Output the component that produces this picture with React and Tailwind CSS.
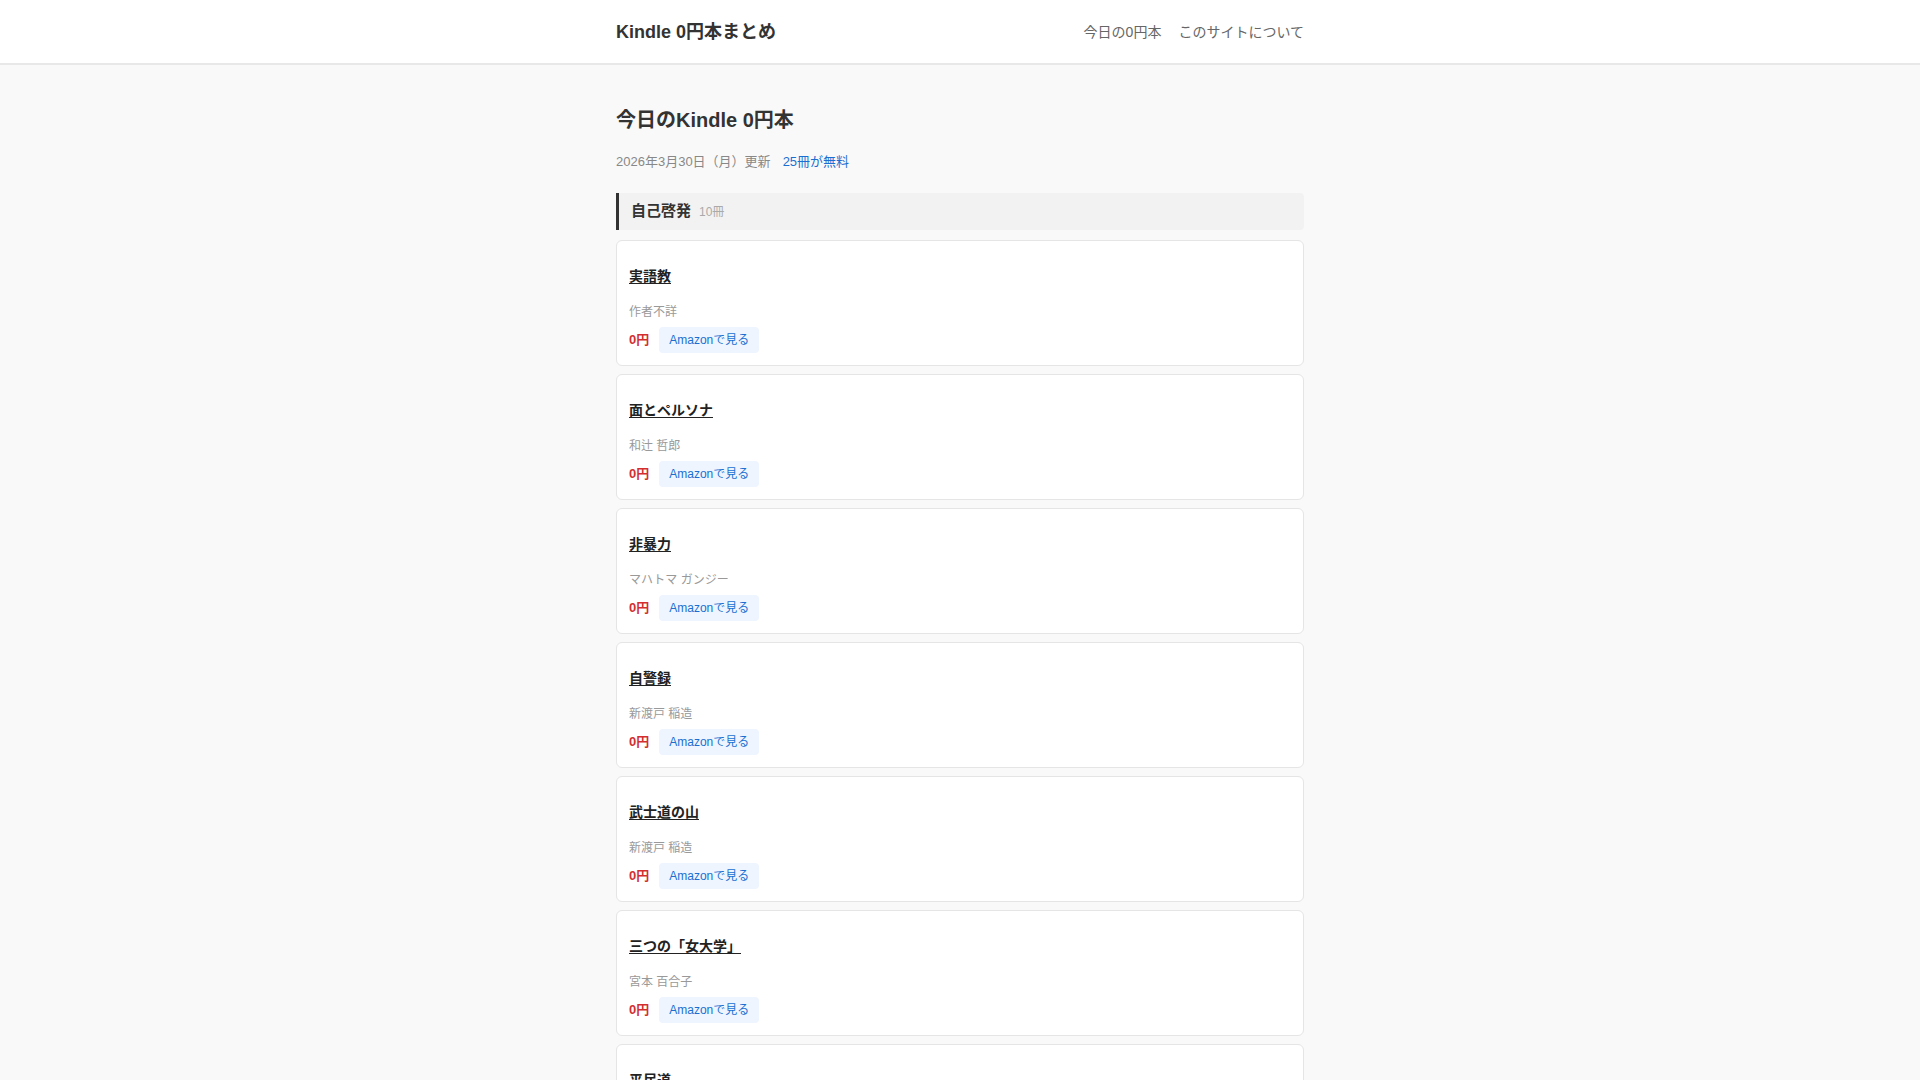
import React from 'react';

const books = [
  { title: '実語教', author: '作者不詳' },
  { title: '面とペルソナ', author: '和辻 哲郎' },
  { title: '非暴力', author: 'マハトマ ガンジー' },
  { title: '自警録', author: '新渡戸 稲造' },
  { title: '武士道の山', author: '新渡戸 稲造' },
  { title: '三つの「女大学」', author: '宮本 百合子' },
  { title: '平民道', author: '新渡戸 稲造' },
  { title: '修養', author: '新渡戸 稲造' },
  { title: '自助論', author: 'サミュエル スマイルズ' },
  { title: '学問のすすめ', author: '福沢 諭吉' },
];

const font = { fontFamily: '"Liberation Sans", "Noto Sans CJK JP", sans-serif' };

const BookCard = ({ title, author }) => (
  <div className="mb-2 rounded-md border border-[#e5e5e5] bg-white px-3 pb-3 pt-[25px]">
    <a href="#" className="block text-sm font-bold leading-[21px] text-[#222] underline underline-offset-2">
      {title}
    </a>
    <div className="mt-4 text-xs leading-[18px] text-[#999]">{author}</div>
    <div className="mt-1.5 flex items-center gap-2.5">
      <span className="text-[13px] font-bold text-[#d32f2f]">0円</span>
      <a href="#" className="flex h-[26px] items-center rounded bg-[#eef5fe] px-2.5 text-xs text-[#1a6fd1]">
        Amazonで見る
      </a>
    </div>
  </div>
);

export default function App() {
  return (
    <div className="min-h-screen bg-[#f9f9f9]" style={font}>
      <header className="border-b-2 border-[#e8e8e8] bg-white">
        <div className="mx-auto flex h-[63px] max-w-[720px] items-center justify-between px-4">
          <span className="text-lg font-bold text-[#333]">Kindle 0円本まとめ</span>
          <nav className="flex gap-[17px] text-sm text-[#666]">
            <a href="#">今日の0円本</a>
            <a href="#">このサイトについて</a>
          </nav>
        </div>
      </header>

      <main className="mx-auto max-w-[720px] px-4 pt-10">
        <h1 className="text-xl font-bold leading-[30px] text-[#333]">今日のKindle 0円本</h1>
        <div className="mt-[17px] flex gap-3 text-[13px] leading-[19px]">
          <span className="text-[#888]">2026年3月30日（月）更新</span>
          <span className="text-[#1a6fd1]">25冊が無料</span>
        </div>

        <section className="mt-[22px]">
          <div className="mb-2.5 flex h-[37px] items-center gap-2 rounded-r border-l-[3px] border-[#333] bg-[#f2f2f2] pl-3">
            <span className="text-[15px] font-bold text-[#333]">自己啓発</span>
            <span className="text-xs text-[#aaa]">10冊</span>
          </div>
          {books.map((b) => (
            <BookCard key={b.title} title={b.title} author={b.author} />
          ))}
        </section>
      </main>
    </div>
  );
}
